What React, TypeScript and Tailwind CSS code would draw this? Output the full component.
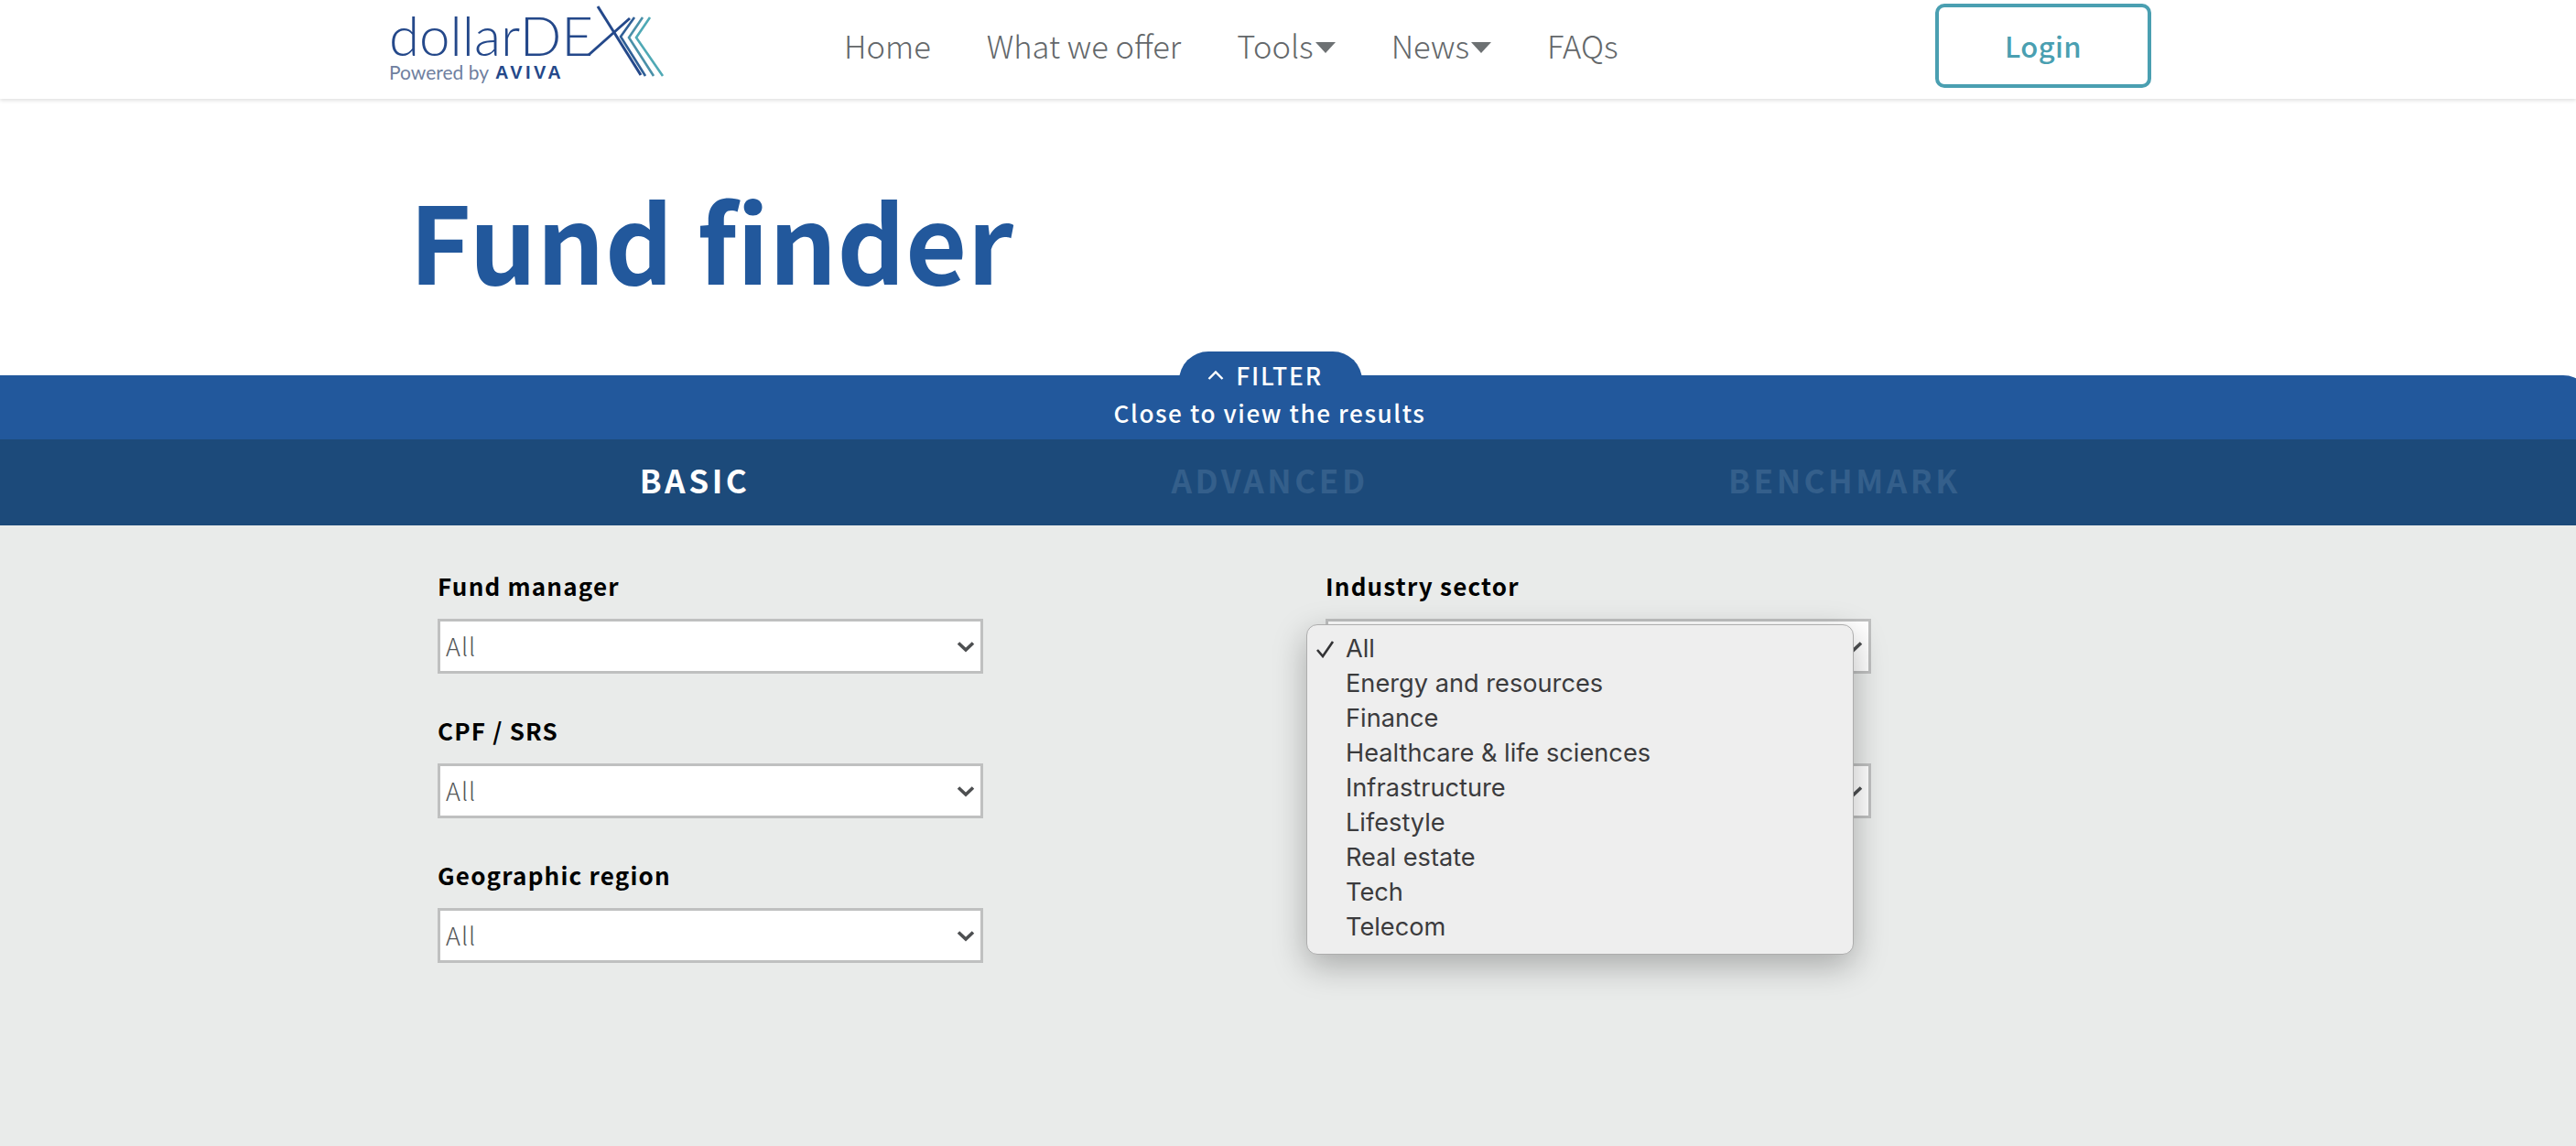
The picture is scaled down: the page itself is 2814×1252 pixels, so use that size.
import React from "react";

const SOURCE = "font-['Noto_Sans_CJK_JP','Noto_Sans',sans-serif]";

function Caret() {
  return (
    <svg width="22" height="13" viewBox="0 0 22 13" className="ml-[2px] mt-[2px]">
      <path d="M0 1 H22 L11 13 Z" fill="#6d7173" />
    </svg>
  );
}

function Logo() {
  return (
    <div className="relative w-[300px] h-[108px] shrink-0">
      <div className="absolute left-0 top-0 text-[60px] leading-[76px] font-light text-[#24488a] font-['Lato',sans-serif] whitespace-nowrap">
        dollarDE
      </div>
      <div className="absolute left-0 top-[67px] text-[21px] leading-[24px] text-[#6f7f9f] font-['Lato',sans-serif] whitespace-nowrap flex items-center">
        Powered by
        <span className="ml-[7px] font-['Liberation_Sans',sans-serif] font-bold text-[#24488a] text-[20px] tracking-[3.4px]">AVIVA</span>
      </div>
      <svg className="absolute left-[215px] top-0" width="90" height="90" viewBox="0 0 90 90" fill="none">
        <path d="M13 7 L60 82" stroke="#24488a" strokeWidth="3" />
        <path d="M3 60 L48 20" stroke="#24488a" strokeWidth="3" />
        <path d="M53 19 L38 40 L65 83" stroke="#2f5f96" strokeWidth="2.6" />
        <path d="M62 19 L47 41 L74 83" stroke="#4a90a8" strokeWidth="2.6" />
        <path d="M70 19 L55 41 L84 83" stroke="#4fa9b5" strokeWidth="2.6" />
      </svg>
    </div>
  );
}

function Field({ label }: { label: string }) {
  return (
    <div className="h-[158px]">
      <div className="h-[40px] text-[26px] leading-[40px] font-bold tracking-[1.2px] text-black whitespace-nowrap">
        {label}
      </div>
      <div className="mt-[16px] h-[60px] border-[3px] border-[#bfc0c0] bg-white flex items-center justify-between pl-[6px] pr-[6px]">
        <span className="text-[27px] text-[#555759] tracking-[1px] font-light">All</span>
        <svg width="20" height="13" viewBox="0 0 20 13" fill="none">
          <path d="M2 2.5 L10 10 L18 2.5" stroke="#4d4f51" strokeWidth="3.6" />
        </svg>
      </div>
    </div>
  );
}

const items = [
  "All",
  "Energy and resources",
  "Finance",
  "Healthcare & life sciences",
  "Infrastructure",
  "Lifestyle",
  "Real estate",
  "Tech",
  "Telecom",
];

export default function App() {
  return (
    <div className={`w-[2814px] h-[1252px] overflow-hidden bg-white flex flex-col ${SOURCE}`}>
      <header className="h-[108px] shrink-0 flex items-center bg-white shadow-[0_2px_4px_rgba(0,0,0,0.12)] pl-[425px] relative z-10">
        <Logo />
        <nav className="ml-[197px] mt-[-8px] flex items-center text-[34.5px] font-light text-[#63676a] whitespace-nowrap">
          <span>Home</span>
          <span className="ml-[61px]">What we offer</span>
          <span className="ml-[61px] flex items-center">Tools<Caret /></span>
          <span className="ml-[61px] flex items-center">News<Caret /></span>
          <span className="ml-[61px]">FAQs</span>
        </nav>
        <button className="absolute left-[2114px] top-[4px] w-[236px] h-[92px] border-[4px] border-[#4a9fb1] rounded-[10px] bg-white text-[#4a9fb1] text-[31px] font-medium tracking-[0.4px]">
          Login
        </button>
      </header>

      <section className="h-[302px] shrink-0 pl-[447px] pt-[82px]">
        <h1 className="text-[116px] leading-[140px] font-bold text-[#22589c] whitespace-nowrap">Fund finder</h1>
      </section>

      <section className="relative h-[70px] w-[2832px] shrink-0 bg-[#22589c] rounded-tr-[32px] flex justify-center text-white">
        <div className="absolute left-[1288px] top-[-26px] w-[200px] h-[46px] rounded-t-[32px] bg-[#22589c] flex items-center justify-center pr-[12px] pt-[6px] text-[26.5px] font-medium tracking-[1.8px]">
          <svg width="18" height="12" viewBox="0 0 18 12" fill="none" className="mr-[13px]">
            <path d="M1.5 10 L9 2.5 L16.5 10" stroke="white" strokeWidth="2.4" />
          </svg>
          FILTER
        </div>
        <div className="mt-[19px] mr-[58px] text-[26.2px] leading-[44px] tracking-[1.55px] whitespace-nowrap font-medium">
          Close to view the results
        </div>
      </section>

      <section className="h-[94px] shrink-0 bg-[#1c4a7a] pl-[445px]">
        <div className="w-[1884px] h-[88px] grid grid-cols-3 items-center text-center text-[35.2px] font-bold tracking-[3.5px]">
          <span className="text-white">BASIC</span>
          <span className="text-[#345f8b]">ADVANCED</span>
          <span className="text-[#345f8b]">BENCHMARK</span>
        </div>
      </section>

      <main className="flex-1 bg-[#e9ebea] pl-[478px] pt-[46px] flex items-start">
        <div className="w-[596px]">
          <Field label="Fund manager" />
          <Field label="CPF / SRS" />
          <Field label="Geographic region" />
        </div>
        <div className="w-[596px] ml-[374px] relative">
          <Field label="Industry sector" />
          <Field label="" />
          <div className="absolute left-[-21px] top-[62px] w-[598px] h-[361px] rounded-[12px] border border-[#adadad] bg-[#eeeeee] shadow-[0_12px_36px_rgba(0,0,0,0.28)] pt-[7px] font-['Inter',sans-serif] text-[27.2px] leading-[38px] text-[#3b3b3d]">
            {items.map((t, i) => (
              <div key={t} className="relative pl-[42px] h-[38px] whitespace-nowrap">
                {i === 0 && (
                  <svg className="absolute left-[9px] top-[9px]" width="22" height="20" viewBox="0 0 22 20" fill="none">
                    <path d="M2 11 L8 18 L19 2" stroke="#333335" strokeWidth="2.6" />
                  </svg>
                )}
                {t}
              </div>
            ))}
          </div>
        </div>
      </main>
    </div>
  );
}
